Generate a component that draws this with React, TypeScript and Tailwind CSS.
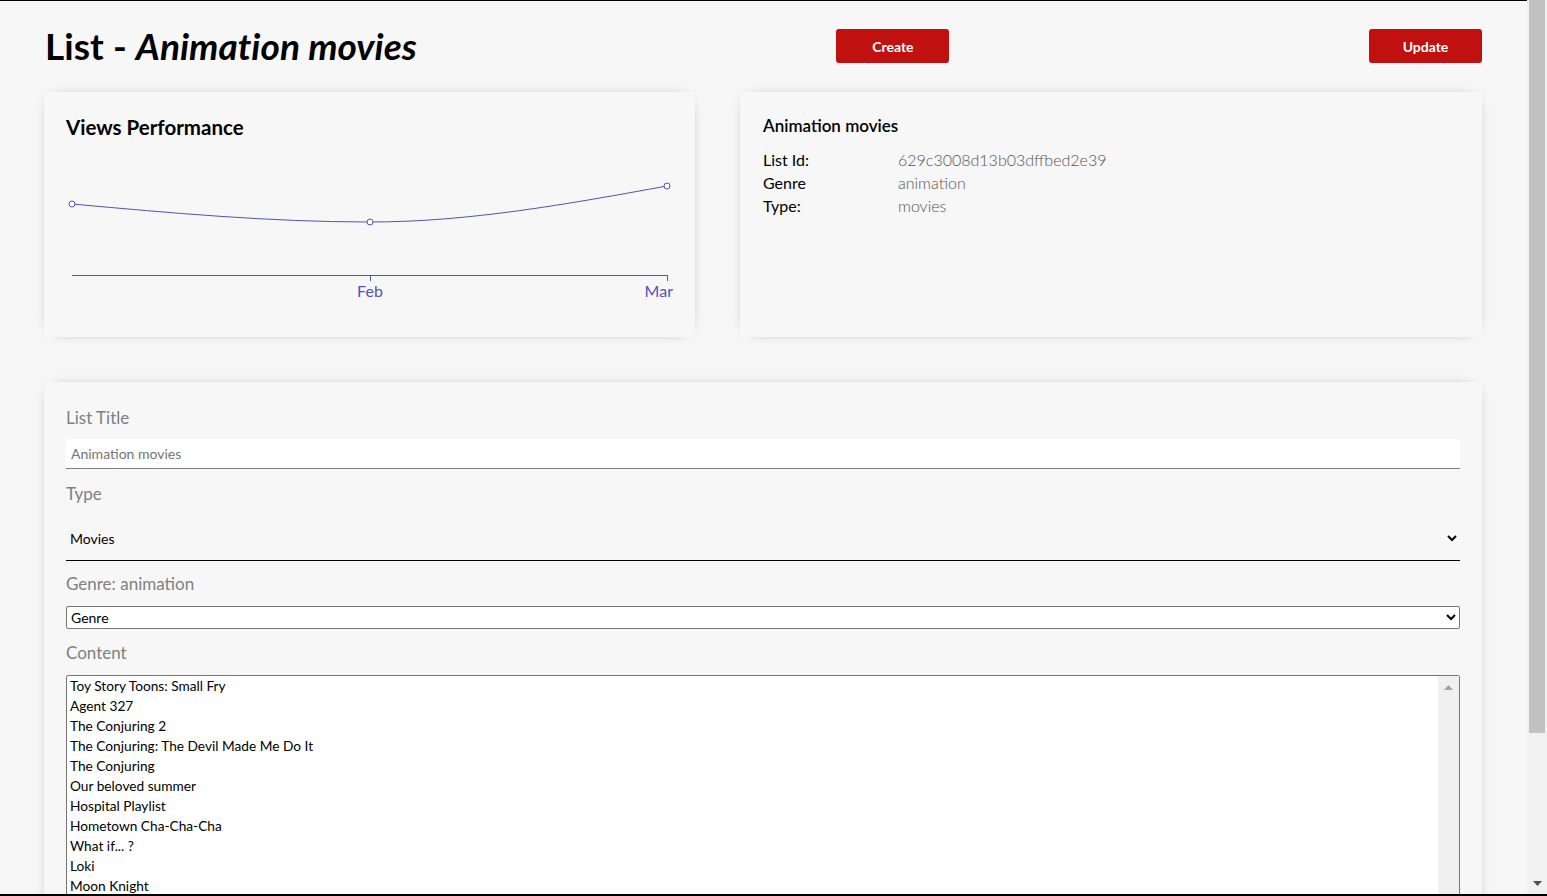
import { useState } from "react";

const contentItems = [
    "Toy Story Toons: Small Fry",
    "Agent 327",
    "The Conjuring 2",
    "The Conjuring: The Devil Made Me Do It",
    "The Conjuring",
    "Our beloved summer",
    "Hospital Playlist",
    "Hometown Cha-Cha-Cha",
    "What if... ?",
    "Loki",
    "Moon Knight",
    "Hawkeye",
    "Ms. Marvel",
];

const ViewsChart = () => {
    const color = "#5550bd";
    return (
        <svg width="607" height="152" viewBox="0 0 607 152" className="block">
            {/* line */}
            <path
                d="M6,46 C105.3,55 204.7,64 304,64 C403,64 502,46 601,28"
                fill="none"
                stroke={color}
                strokeWidth="1"
            />
            {/* axis */}
            <line x1="6" y1="117.5" x2="601" y2="117.5" stroke={color} strokeWidth="1" />
            <line x1="304.5" y1="117" x2="304.5" y2="123" stroke={color} strokeWidth="1" />
            <line x1="601.5" y1="117" x2="601.5" y2="123" stroke={color} strokeWidth="1" />
            <text x="304" y="139" textAnchor="middle" fill={color} fontSize="16">
                Feb
            </text>
            <text x="607" y="139" textAnchor="end" fill={color} fontSize="16">
                Mar
            </text>
            {/* dots */}
            <circle cx="6" cy="46" r="3" fill="#fff" stroke={color} />
            <circle cx="304" cy="64" r="3" fill="#fff" stroke={color} />
            <circle cx="601" cy="28" r="3" fill="#fff" stroke={color} />
        </svg>
    );
};

export default function App() {
    const [selected, setSelected] = useState<string[]>([]);

    const toggle = (item: string) =>
        setSelected((s) => (s.includes(item) ? s.filter((i) => i !== item) : [...s, item]));

    return (
        <div
            className="h-screen flex flex-col bg-[#f7f7f7] text-black"
            style={{ fontFamily: "Lato, 'Open Sans', sans-serif" }}
        >
            <div className="flex-1 flex min-h-0">
                <main className="flex-1 overflow-hidden border-t border-black pl-[44px] pr-[45px] pt-[23px]">
                    {/* Header */}
                    <div className="flex justify-between items-center">
                        <h1 className="text-[37px] font-bold leading-[44px] pl-[1px] tracking-[0.05px]">
                            List - <em>Animation movies</em>
                        </h1>
                        <button className="w-[113px] h-[34px] rounded-[3px] bg-[#c01010] text-white text-[14px] font-bold">
                            Create
                        </button>
                        <button className="w-[113px] h-[34px] rounded-[3px] bg-[#c01010] text-white text-[14px] font-bold">
                            Update
                        </button>
                    </div>

                    {/* Top cards */}
                    <div className="flex gap-[45px] mt-[24px]">
                        <div className="w-[651px] h-[245px] px-[22px] pt-[24px] shadow-[0px_0px_15px_-10px_rgba(0,0,0,0.75)]">
                            <h3 className="text-[20.5px] font-bold leading-[23px]">Views Performance</h3>
                            <div className="mt-[19px]">
                                <ViewsChart />
                            </div>
                        </div>
                        <div className="flex-1 h-[245px] px-[23px] pt-[24px] shadow-[0px_0px_15px_-10px_rgba(0,0,0,0.75)]">
                            <div className="text-[17px] font-semibold leading-[20px]">Animation movies</div>
                            <div className="mt-3 grid grid-cols-[135px_1fr] text-[16px] leading-[23px]">
                                <span>List Id:</span>
                                <span className="font-light text-[#555]">629c3008d13b03dffbed2e39</span>
                                <span>Genre</span>
                                <span className="font-light text-[#555]">animation</span>
                                <span>Type:</span>
                                <span className="font-light text-[#555]">movies</span>
                            </div>
                        </div>
                    </div>

                    {/* Form card */}
                    <div className="mt-[45px] px-[22px] pt-[26px] pb-[22px] shadow-[0px_0px_15px_-10px_rgba(0,0,0,0.75)]">
                        <form className="flex flex-col" onSubmit={(e) => e.preventDefault()}>
                            <label className="text-[17px] leading-[20px] text-[#808080]">List Title</label>
                            <input
                                type="text"
                                placeholder="Animation movies"
                                className="mt-[11px] h-[30px] bg-white border-b border-[#808080] pl-[5px] text-[14px] outline-none placeholder:text-[#757575]"
                            />

                            <label className="mt-[15px] text-[17px] leading-[20px] text-[#808080]">Type</label>
                            <select className="mt-[12px] h-[45px] pr-[4px] bg-transparent border-b border-black text-[14px] text-black outline-none">
                                <option value="movies">Movies</option>
                                <option value="series">Series</option>
                            </select>

                            <label className="mt-[13px] text-[17px] leading-[20px] text-[#808080]">Genre: animation</label>
                            <select className="mt-[12px] h-[23px] pr-[4px] bg-white border border-[#767676] rounded-[2px] text-[14px] text-black outline-none">
                                <option>Genre</option>
                                <option value="adventure">Adventure</option>
                                <option value="comedy">Comedy</option>
                                <option value="animation">Animation</option>
                                <option value="drama">Drama</option>
                            </select>

                            <label className="mt-[14px] text-[17px] leading-[20px] text-[#808080]">Content</label>
                            <div className="mt-[12px] h-[300px] flex bg-white border border-[#767676] rounded-[2px] text-[13.7px] leading-[20px]">
                                <div className="flex-1">
                                    {contentItems.map((item) => (
                                        <div
                                            key={item}
                                            onClick={() => toggle(item)}
                                            className={`pl-[3px] cursor-default ${selected.includes(item) ? "bg-[#cecece]" : ""}`}
                                        >
                                            {item}
                                        </div>
                                    ))}
                                </div>
                                {/* listbox scrollbar (disabled) */}
                                <div className="w-[21px] bg-[#f0f0f0] flex justify-center pt-[9px]">
                                    <svg width="9" height="5" viewBox="0 0 9 5">
                                        <path d="M0 5 L4.5 0 L9 5 Z" fill="#a3a3a3" />
                                    </svg>
                                </div>
                            </div>
                        </form>
                    </div>
                </main>

                {/* page scrollbar */}
                <div className="w-[20px] bg-[#f1f1f1] flex flex-col px-[2px]">
                    <div className="h-[733px] bg-[#c1c1c1]" />
                    <div className="flex-1" />
                    <div className="flex justify-center pb-[8px]">
                        <svg width="9" height="5" viewBox="0 0 9 5">
                            <path d="M0 0 L9 0 L4.5 5 Z" fill="#505050" />
                        </svg>
                    </div>
                </div>
            </div>
            <div className="h-[2px] bg-black" />
        </div>
    );
}
